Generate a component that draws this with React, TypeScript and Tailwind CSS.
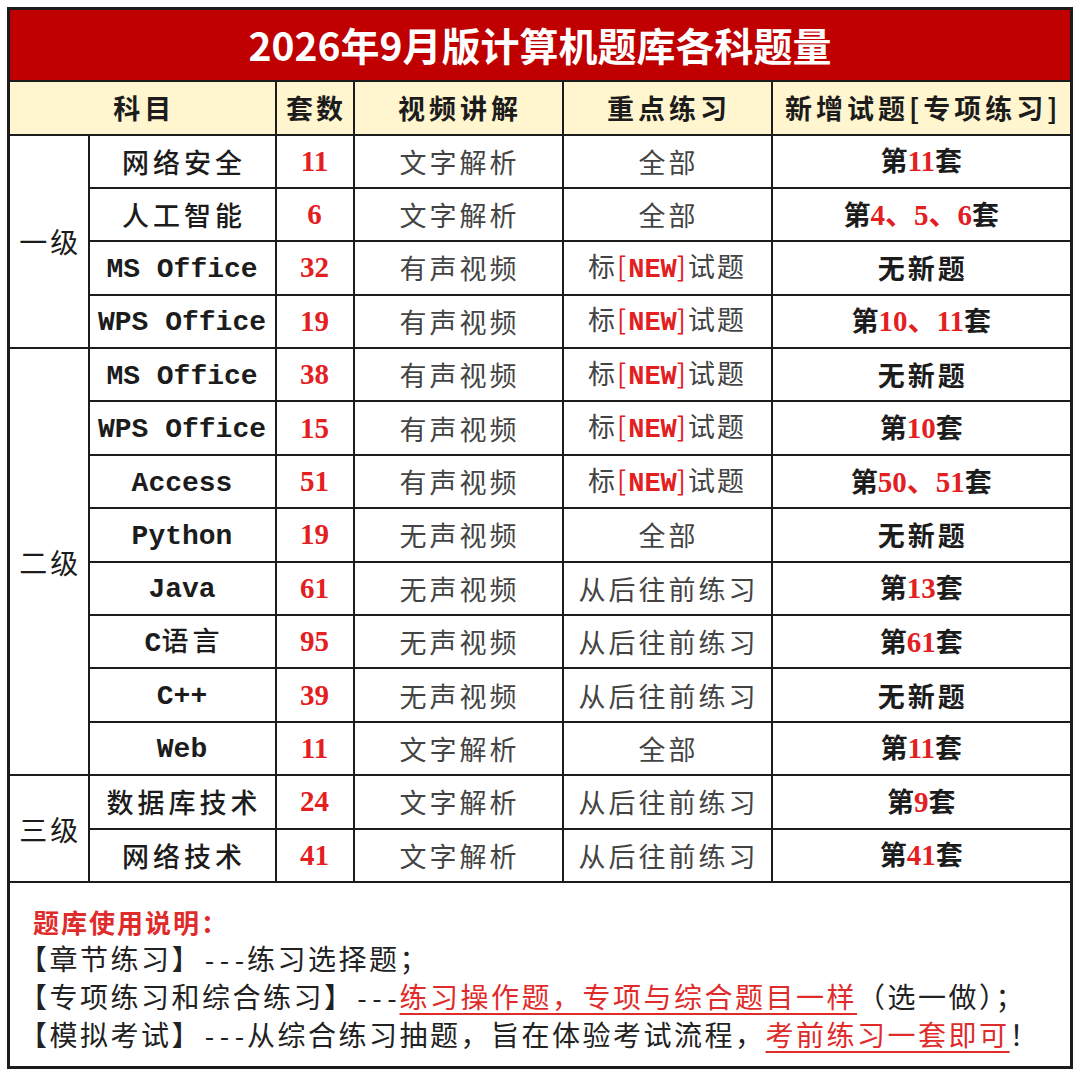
import React from 'react';

type Row = {
  level?: string;
  span?: number;
  name: string;
  count: string;
  video: string;
  focus: string;
  added: string;
};

const rows: Row[] = [
  { level: '一级', span: 4, name: '网络安全', count: '11', video: '文字解析', focus: '全部', added: '第11套' },
  { name: '人工智能', count: '6', video: '文字解析', focus: '全部', added: '第4、5、6套' },
  { name: 'MS Office', count: '32', video: '有声视频', focus: 'NEW', added: '无新题' },
  { name: 'WPS Office', count: '19', video: '有声视频', focus: 'NEW', added: '第10、11套' },
  { level: '二级', span: 8, name: 'MS Office', count: '38', video: '有声视频', focus: 'NEW', added: '无新题' },
  { name: 'WPS Office', count: '15', video: '有声视频', focus: 'NEW', added: '第10套' },
  { name: 'Access', count: '51', video: '有声视频', focus: 'NEW', added: '第50、51套' },
  { name: 'Python', count: '19', video: '无声视频', focus: '全部', added: '无新题' },
  { name: 'Java', count: '61', video: '无声视频', focus: '从后往前练习', added: '第13套' },
  { name: 'C语言', count: '95', video: '无声视频', focus: '从后往前练习', added: '第61套' },
  { name: 'C++', count: '39', video: '无声视频', focus: '从后往前练习', added: '无新题' },
  { name: 'Web', count: '11', video: '文字解析', focus: '全部', added: '第11套' },
  { level: '三级', span: 2, name: '数据库技术', count: '24', video: '文字解析', focus: '从后往前练习', added: '第9套' },
  { name: '网络技术', count: '41', video: '文字解析', focus: '从后往前练习', added: '第41套' },
];

const cell = 'border-2 border-[#1c1c1c] p-0 text-center align-middle leading-none';
const dash = "font-['Liberation_Mono',monospace] text-[25px] tracking-normal leading-none";
const mark = 'text-[#e02b2b] underline decoration-[#e02b2b] underline-offset-[5px]';

const Name = ({ text }: { text: string }) => (
  <>
    {text
      .split(/([A-Za-z+ ]+)/)
      .filter(Boolean)
      .map((part, i) =>
        /[A-Za-z+]/.test(part) ? (
          <span key={i} className="font-['Liberation_Mono',monospace] text-[28px] font-bold whitespace-pre">
            {part}
          </span>
        ) : (
          <span key={i} className="tracking-[4px] mr-[-4px]">
            {part}
          </span>
        )
      )}
  </>
);

const Focus = ({ text }: { text: string }) =>
  text === 'NEW' ? (
    <span className="tracking-[2px]">
      标
      <span className="text-[#e3201f]">
        [<span className="font-['Liberation_Mono',monospace] font-bold tracking-normal">NEW</span>]
      </span>
      试题
    </span>
  ) : (
    <span className="tracking-[3px] mr-[-3px]">{text}</span>
  );

const Added = ({ text }: { text: string }) => {
  if (!text.startsWith('第')) return <span className="tracking-[3px] mr-[-3px]">{text}</span>;
  const mid = text.slice(1, -1);
  return (
    <span>
      第
      <span className="text-[#e3201f] font-['Liberation_Serif','Noto_Sans_CJK_SC',serif] text-[29px]">{mid}</span>套
    </span>
  );
};

export default function App() {
  return (
    <div className="min-h-screen bg-white pt-[7px] pl-[7px] font-['Noto_Sans_CJK_SC',sans-serif] text-[#1c1c1c]">
      <table className="w-[1066px] table-fixed border-collapse border-[3px] border-[#1c1c1c]">
        <colgroup>
          <col className="w-[80px]" />
          <col className="w-[187px]" />
          <col className="w-[78px]" />
          <col className="w-[209px]" />
          <col className="w-[209px]" />
          <col />
        </colgroup>
        <tbody>
          <tr className="h-[72px]">
            <td colSpan={6} className={`${cell} bg-[#c00000] text-white text-[39px] font-bold`}>
              2026年9月版计算机题库各科题量
            </td>
          </tr>
          <tr className="h-[54px] bg-[#fff5cf] text-[27px] font-bold">
            <td colSpan={2} className={cell}>
              <span className="tracking-[4px] mr-[-4px]">科目</span>
            </td>
            <td className={cell}>
              <span className="tracking-[3px] mr-[-3px]">套数</span>
            </td>
            <td className={cell}>
              <span className="tracking-[4px] mr-[-4px]">视频讲解</span>
            </td>
            <td className={cell}>
              <span className="tracking-[4px] mr-[-4px]">重点练习</span>
            </td>
            <td className={cell}>
              <span className="tracking-[4px] mr-[-4px]">新增试题[专项练习]</span>
            </td>
          </tr>
          {rows.map((r, i) => (
            <tr key={i} className="h-[53.4px] text-[27px]">
              {r.level && (
                <td rowSpan={r.span} className={`${cell} text-[28px]`}>
                  <span className="tracking-[3px] mr-[-3px]">{r.level}</span>
                </td>
              )}
              <td className={`${cell} font-medium`}>
                <Name text={r.name} />
              </td>
              <td className={`${cell} text-[#e3201f] font-['Liberation_Serif',serif] text-[29px] font-bold`}>
                {r.count}
              </td>
              <td className={`${cell} text-[#444]`}>
                <span className="tracking-[3px] mr-[-3px]">{r.video}</span>
              </td>
              <td className={`${cell} text-[#444]`}>
                <Focus text={r.focus} />
              </td>
              <td className={`${cell} font-bold`}>
                <Added text={r.added} />
              </td>
            </tr>
          ))}
          <tr className="h-[186px]">
            <td colSpan={6} className={`${cell} text-left align-top pt-[22px] pl-[9px] text-[28px] text-[#222] tracking-[2.5px]`}>
              <div className="h-[34px] leading-[34px] pl-[14px] font-bold text-[#e02b2b] text-[26px] tracking-[2px]">题库使用说明：</div>
              <div className="h-[38px] leading-[38px] whitespace-nowrap">
                【章节练习】<span className={dash}>---</span>练习选择题；
              </div>
              <div className="h-[38px] leading-[38px] whitespace-nowrap">
                【专项练习和综合练习】<span className={dash}>---</span>
                <span className={mark}>练习操作题，专项与综合题目一样</span>（选一做）；
              </div>
              <div className="h-[38px] leading-[38px] whitespace-nowrap">
                【模拟考试】<span className={dash}>---</span>从综合练习抽题，旨在体验考试流程，
                <span className={mark}>考前练习一套即可</span>！
              </div>
            </td>
          </tr>
        </tbody>
      </table>
    </div>
  );
}
